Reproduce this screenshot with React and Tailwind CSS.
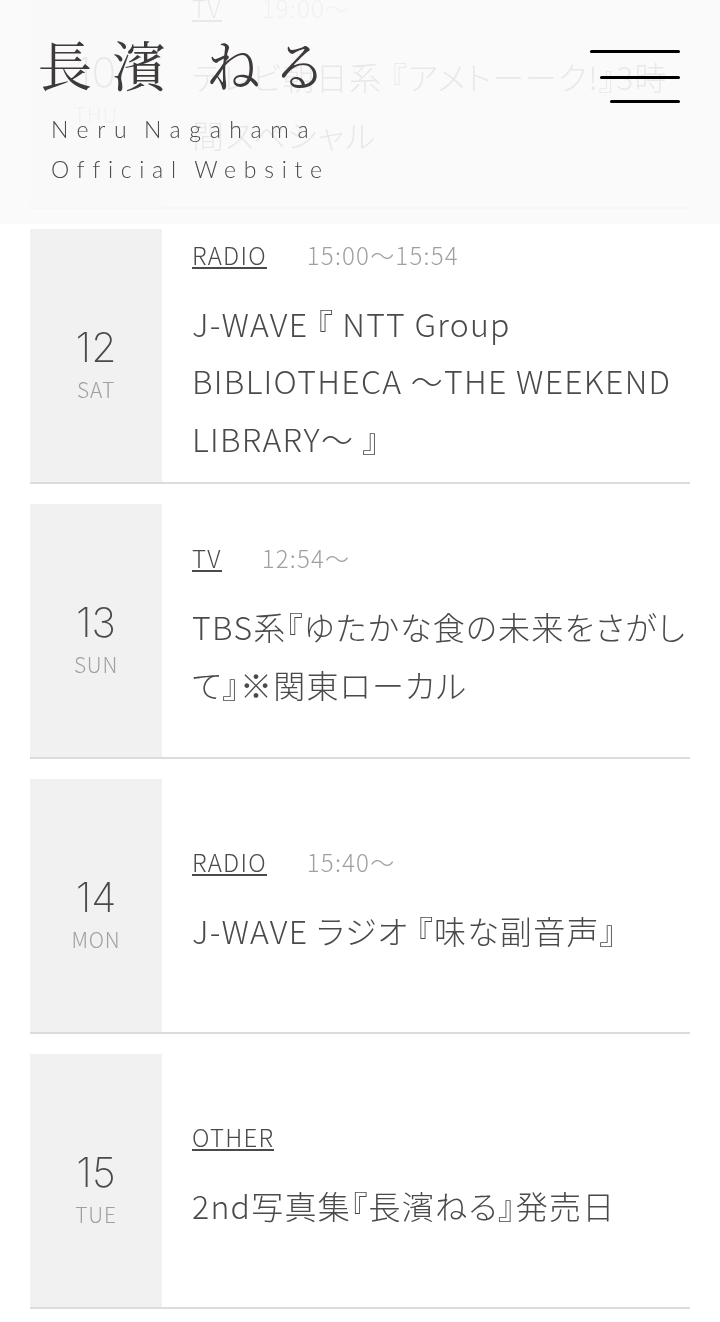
import React from "react";

const schedule = [
  {
    day: "10",
    week: "THU",
    category: "TV",
    time: "19:00〜",
    title: ["テレビ朝日系 『アメトーーク!』3時", "間スペシャル"],
  },
  {
    day: "12",
    week: "SAT",
    category: "RADIO",
    time: "15:00〜15:54",
    title: ["J-WAVE 『 NTT Group", "BIBLIOTHECA 〜THE WEEKEND", "LIBRARY〜 』"],
  },
  {
    day: "13",
    week: "SUN",
    category: "TV",
    time: "12:54〜",
    title: ["TBS系『ゆたかな食の未来をさがし", "て』※関東ローカル"],
  },
  {
    day: "14",
    week: "MON",
    category: "RADIO",
    time: "15:40〜",
    title: ["J-WAVE ラジオ 『味な副音声』"],
  },
  {
    day: "15",
    week: "TUE",
    category: "OTHER",
    time: "",
    title: ["2nd写真集『長濱ねる』発売日"],
  },
];

const Header = () => {
  return (
    <header className="fixed top-0 left-0 z-10 flex h-[224px] w-full justify-between bg-[#fafafa]/90 pl-[38px] pr-10">
      <div className="pt-[33px] text-[#3e3a39]">
        <h1 className="flex h-[62px] items-center whitespace-nowrap font-['Noto_Serif_CJK_JP','Noto_Sans_CJK_JP',serif] text-[54px] font-normal leading-none">
          <span className="w-[74px]">長</span>
          <span className="w-[94px]">濱</span>
          <span className="w-[70px]">ね</span>
          <span>る</span>
        </h1>
        <div className="ml-[13px] mt-[14px] whitespace-nowrap font-['Lato',sans-serif] text-[23px] font-light leading-[40px] text-[#4a4a4a]">
          <p className="tracking-[8.6px] [word-spacing:-6px]">Neru Nagahama</p>
          <p className="tracking-[7.7px] [word-spacing:-3px]">
            Official Website
          </p>
        </div>
      </div>
      <button className="flex h-[53px] flex-col items-end pt-[50px]">
        <span className="h-[3px] w-[90px] shrink-0 rounded-full bg-black"></span>
        <span className="mt-[23px] h-[3px] w-[80px] shrink-0 rounded-full bg-black"></span>
        <span className="mt-[21px] h-[3px] w-[70px] shrink-0 rounded-full bg-black"></span>
      </button>
    </header>
  );
};

const ScheduleItem = ({ day, week, category, time, title }) => {
  return (
    <li className="flex h-[255px] shrink-0 border-b-2 border-[#dcdcdc]">
      <div className="flex w-[132px] shrink-0 flex-col items-center bg-[#f1f1f1] pt-[96px]">
        <p className="font-['Inter',sans-serif] text-[41px] font-extralight leading-[44px]">
          {day}
        </p>
        <p className="mt-[5px] text-[21px] leading-[30px] tracking-[0.8px] text-[#a0a0a0]">
          {week}
        </p>
      </div>
      <div className="flex flex-col justify-center pb-[10px] pl-[30px]">
        <div className="flex h-[41px] items-center text-[24px] leading-[29px]">
          <span className="h-[29px] border-b-2 border-[#4a4a4a] leading-[30px] tracking-[1.2px]">
            {category}
          </span>
          <span className="ml-[40px] tracking-[1.2px] text-[#a0a0a0]">
            {time}
          </span>
        </div>
        <p className="mt-[20px] whitespace-nowrap text-[32px] leading-[57.6px] tracking-[1.28px]">
          {title.map((line, index) => (
            <span key={index} className="block">
              {line}
            </span>
          ))}
        </p>
      </div>
    </li>
  );
};

const App = () => {
  return (
    <div className="h-[1322px] overflow-hidden bg-white font-['Noto_Sans_CJK_JP',sans-serif] font-light text-[#4a4a4a] [font-feature-settings:'palt']">
      <Header />
      <ul className="-mt-[46px] flex flex-col gap-5 px-[30px] will-change-transform">
        {schedule.map((item) => (
          <ScheduleItem key={item.day} {...item} />
        ))}
      </ul>
    </div>
  );
};

export default App;
